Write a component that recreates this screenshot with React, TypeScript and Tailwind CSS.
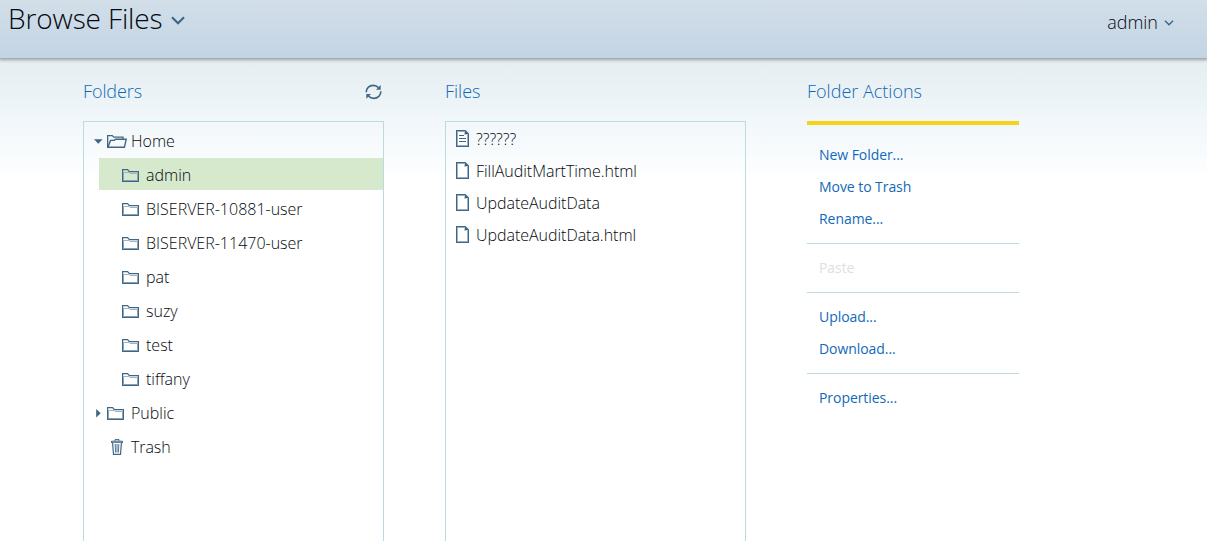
import { useState } from 'react'

const folders = ['admin', 'BISERVER-10881-user', 'BISERVER-11470-user', 'pat', 'suzy', 'test', 'tiffany']

const files = [
  { name: '??????', type: 'report' },
  { name: 'FillAuditMartTime.html', type: 'file' },
  { name: 'UpdateAuditData', type: 'file' },
  { name: 'UpdateAuditData.html', type: 'file' },
]

const actionGroups = [
  ['New Folder...', 'Move to Trash', 'Rename...'],
  ['Paste'],
  ['Upload...', 'Download...'],
  ['Properties...'],
]

function Chevron({ className }: { className: string }) {
  return (
    <svg className={className} viewBox="0 0 14 9" fill="none" aria-hidden="true">
      <path d="M1 1.2L7 7.2L13 1.2" stroke="#3b6684" strokeWidth="2.1" />
    </svg>
  )
}

function FolderIcon() {
  return (
    <svg width="17" height="13" viewBox="0 0 17 13" fill="none" className="shrink-0" aria-hidden="true">
      <path d="M1.5 11.5V3.5H7L8 4.5H15.5V11.5Z" stroke="#9db3c4" />
      <path d="M0.6 12.4V0.6H5.6L7.4 2.6H16.4V12.4Z" stroke="#3f6785" strokeWidth="1.2" />
    </svg>
  )
}

function OpenFolderIcon() {
  return (
    <svg width="20" height="13" viewBox="0 0 20 13" fill="none" className="shrink-0" aria-hidden="true">
      <path d="M0.65 12.2V0.6H5.2L6.8 2.1H16V4.2" stroke="#3f6785" strokeWidth="1.3" />
      <path d="M0.9 12.3L3.5 5.4H7.2L8.6 4.2H19.2L17.4 12.3Z" stroke="#3f6785" strokeWidth="1.4" />
    </svg>
  )
}

function FileIcon({ lines }: { lines: boolean }) {
  return (
    <svg width="13" height="17" viewBox="0 0 13 17" fill="none" className="shrink-0" aria-hidden="true">
      <path d="M1.5 1.5H8.5V4.5H11.5V15.5H1.5Z" fill="#fff" stroke="#b6c6d2" />
      <path d="M0.6 0.6H9.2L12.4 3.8V16.4H0.6Z" stroke="#3f6785" strokeWidth="1.2" />
      <path d="M9 0.6V4H12.4Z" fill="#3f6785" />
      {lines && <path d="M3 5.5H8M3 8.5H10M3 11.5H10" stroke="#3f6785" />}
    </svg>
  )
}

function TrashIcon() {
  return (
    <svg width="12" height="16" viewBox="0 0 12 16" fill="none" className="shrink-0" aria-hidden="true">
      <path d="M0.5 4V2.2H11.5V4" stroke="#3f6785" />
      <path d="M4 1.8V0.6H8V1.8M0.5 3.3H11.5" stroke="#3f6785" />
      <path d="M1.6 4L2.5 15.3H9.5L10.4 4" stroke="#3f6785" strokeWidth="1.2" />
      <path d="M4.2 5L4.6 13.5M6 5V13.5M7.8 5L7.4 13.5" stroke="#3f6785" strokeWidth="0.9" />
    </svg>
  )
}

function RefreshIcon() {
  return (
    <svg width="17" height="16" viewBox="0 0 17 16" fill="none" aria-hidden="true">
      <path d="M1.2 8.3C1.1 4.2 4.2 1.4 8.2 1.4C10.4 1.4 12.2 2.2 13.6 3.7" stroke="#3f6785" strokeWidth="1.6" />
      <path d="M15.8 7.2C16 11.4 12.8 14.4 8.8 14.4C6.6 14.4 4.8 13.5 3.4 12" stroke="#3f6785" strokeWidth="1.6" />
      <path d="M15.7 1V5.7H11Z" fill="#3f6785" />
      <path d="M1.3 14.8V10.1H6Z" fill="#3f6785" />
    </svg>
  )
}

export default function App() {
  const [selected, setSelected] = useState('admin')

  return (
    <div className="flex h-[541px] w-full flex-col overflow-hidden bg-white font-['Open_Sans',sans-serif] font-light text-[#04080f]">
      {/* Top bar */}
      <header className="z-10 flex h-[58px] shrink-0 justify-between bg-linear-to-b from-[#d2dfe9] to-[#c3d4e4] pr-[33px] pl-2 shadow-[0_1px_3px_1px_rgba(0,0,0,0.32)]">
        <button className="flex h-[37px] items-center">
          <span className="text-[28px] leading-[37px] tracking-[-0.12px]">Browse Files</span>
          <Chevron className="mt-1 ml-2 h-[9px] w-[14px]" />
        </button>
        <button className="flex h-[45px] items-center">
          <span className="text-[18px]">admin</span>
          <Chevron className="ml-1.5 h-1.5 w-[10px]" />
        </button>
      </header>

      <main className="flex min-h-0 flex-1 gap-[61px] bg-linear-to-b from-[#e4edf0] via-[#f1f7fa] via-[62px] to-white to-[125px] pl-[83px]">
        {/* Folders */}
        <section className="flex w-[301px] flex-col">
          <div className="flex h-[63px] shrink-0 items-center justify-between pt-[3px] pr-[2px]">
            <h2 className="text-[18px] tracking-[-0.1px] text-[#0f68b4]">Folders</h2>
            <button aria-label="Refresh" className="pt-px">
              <RefreshIcon />
            </button>
          </div>
          <div className="flex flex-1 flex-col gap-0.5 border border-b-0 border-[#bcdbe1] pt-[2px]">
            <div className="flex h-8 items-center pt-0.5 pl-[10px]">
              <svg width="9" height="5" viewBox="0 0 9 5" className="mr-[4px]" aria-hidden="true">
                <path d="M0 0.3H8.6L4.3 4.8Z" fill="#3b6684" />
              </svg>
              <OpenFolderIcon />
              <span className="ml-[4px] text-base">Home</span>
            </div>
            {folders.map((name) => (
              <button
                key={name}
                onClick={() => setSelected(name)}
                className={`ml-[15px] flex h-8 items-center pt-0.5 pl-[23px] ${selected === name ? 'bg-[#d6e9cd]' : ''}`}
              >
                <FolderIcon />
                <span className="ml-[7px] text-base">{name}</span>
              </button>
            ))}
            <div className="flex h-8 items-center pt-0.5 pl-[12px]">
              <svg width="5" height="9" viewBox="0 0 5 9" className="mr-[6px]" aria-hidden="true">
                <path d="M0.2 0V8.6L4.7 4.3Z" fill="#3b6684" />
              </svg>
              <FolderIcon />
              <span className="ml-[7px] text-base">Public</span>
            </div>
            <div className="flex h-8 items-center pt-0.5 pl-[27px]">
              <TrashIcon />
              <span className="ml-[8px] text-base tracking-[-0.1px]">Trash</span>
            </div>
          </div>
        </section>

        {/* Files */}
        <section className="flex w-[301px] flex-col">
          <div className="flex h-[63px] shrink-0 items-center pt-[3px]">
            <h2 className="text-[18px] text-[#0f68b4]">Files</h2>
          </div>
          <div className="flex flex-1 flex-col border border-b-0 border-[#bcdbe1] pt-px">
            {files.map((file) => (
              <div key={file.name} className="flex h-8 items-center pl-[10px]">
                <div className="pb-px">
                  <FileIcon lines={file.type === 'report'} />
                </div>
                <span className="ml-[7px] text-base tracking-[-0.03px]">{file.name}</span>
              </div>
            ))}
          </div>
        </section>

        {/* Folder actions */}
        <section className="w-[212px]">
          <div className="flex h-[63px] items-center pt-[3px]">
            <h2 className="text-[18px] text-[#0f68b4]">Folder Actions</h2>
          </div>
          <div className="border-t-4 border-[#f6d218] pt-1.5">
            {actionGroups.map((group) => (
              <div key={group[0]} className="border-b border-[#bcdbe1] py-2 last:border-b-0">
                {group.map((action) => (
                  <button
                    key={action}
                    disabled={action === 'Paste'}
                    className="flex h-8 w-full items-center pb-0.5 pl-3 text-[14px] font-normal tracking-[-0.06px] text-[#1269b8] disabled:text-[#e0e0e0]"
                  >
                    {action}
                  </button>
                ))}
              </div>
            ))}
          </div>
        </section>
      </main>
    </div>
  )
}
